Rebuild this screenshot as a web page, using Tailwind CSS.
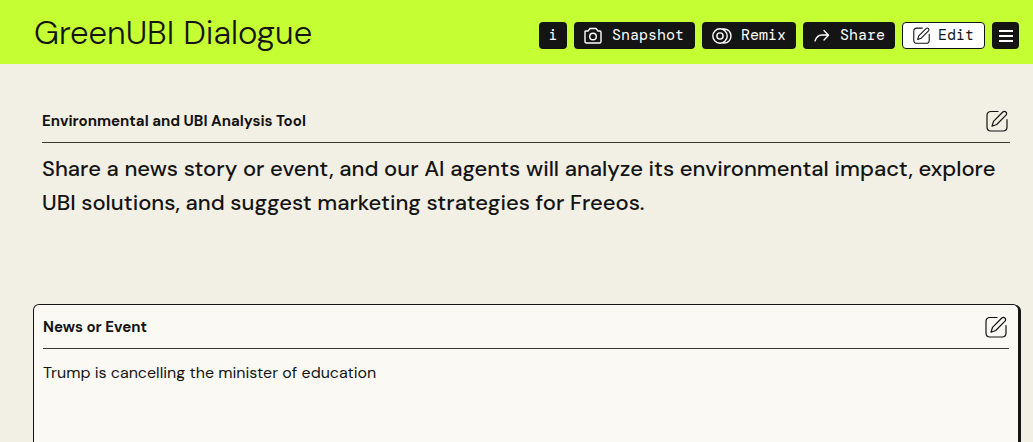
<!DOCTYPE html>
<html lang="en">
<head>
<meta charset="utf-8">
<meta name="viewport" content="width=device-width, initial-scale=1">
<title>GreenUBI Dialogue</title>
<script src="https://cdn.jsdelivr.net/npm/@tailwindcss/browser@4"></script>
</head>
<body class="min-h-screen bg-[#f2efe4] font-['DM_Sans','Inter',sans-serif] text-[#141414]">
<svg class="hidden" aria-hidden="true">
  <symbol id="pencil" viewBox="0 0 22 22" fill="none" stroke="currentColor" stroke-linecap="round" stroke-linejoin="round">
    <path d="M12 1.500H5Q1 1.500 1 5.500V17Q1 21 5 21H17Q21 21 21 17V9.500"/>
    <path d="M6 16.200L7.500 11.400L16.800 2Q18.400 .6 19.900 2Q21.300 3.500 20 5.100L10.700 14.500Z"/>
  </symbol>
</svg>
<header class="flex h-16 items-center justify-between bg-[#c5ff33] pr-[14px] pl-[34px]">
  <h1 class="pt-px text-[33px] leading-10 font-light whitespace-nowrap">GreenUBI Dialogue</h1>
  <nav class="flex gap-[7px] pt-[7px] font-['DM_Mono','Liberation_Mono',monospace] text-[15px] leading-5">
    <button class="h-[27px] w-7 rounded bg-[#141414] pb-[2px] text-white">i</button>
    <button class="flex h-[27px] items-center gap-[10px] rounded bg-[#141414] pr-[11px] pl-[10px] text-white">
      <svg class="h-5 w-[18px]" viewBox="0 0 18 20" fill="none" stroke="currentColor" stroke-width="1.4" stroke-linejoin="round"><path d="M1 5.500Q1 5 2 5H4L6 2.500H12L14 5H16Q17 5 17 6V15.500Q17 17 15.500 17H2.500Q1 17 1 15.500Z"/><circle cx="9" cy="10.500" r="3.300"/></svg>
      <span class="pb-[2px]">Snapshot</span>
    </button>
    <button class="flex h-[27px] items-center gap-[9px] rounded bg-[#141414] px-[10px] text-white">
      <svg class="h-5 w-5" viewBox="0 0 20 20" fill="none" stroke="currentColor" stroke-width="1.4"><circle cx="8" cy="10" r="7.200"/><circle cx="8" cy="10" r="3.100"/><path d="M10.500 3.100C21.800 1.500 21.800 18.500 10.500 16.900"/></svg>
      <span class="pb-[2px]">Remix</span>
    </button>
    <button class="flex h-[27px] items-center gap-[9px] rounded bg-[#141414] px-[10px] text-white">
      <svg class="h-5 w-[18px]" viewBox="0 0 18 20" fill="none" stroke="currentColor" stroke-width="1.3" stroke-linecap="round" stroke-linejoin="round"><path d="M2 15Q4 9 9 9H15.500M11 4.500L15.500 9.200L11 14"/></svg>
      <span class="pb-[2px]">Share</span>
    </button>
    <button class="flex h-[27px] items-center gap-2 rounded border border-[#141414] bg-white px-[10px]">
      <svg class="h-[17px] w-[17px]" stroke-width="1.4"><use href="#pencil"/></svg>
      <span class="pb-[2px]">Edit</span>
    </button>
    <button class="flex h-[27px] w-[27px] items-center justify-center rounded bg-[#141414] text-white" aria-label="Menu">
      <svg class="h-[13px] w-[14px]" viewBox="0 0 14 13" stroke="currentColor" stroke-width="2"><path d="M0 2H14M0 7H14M0 12H14"/></svg>
    </button>
  </nav>
</header>
<main class="pr-[14px] pl-[33px]">
  <section class="mt-8 pr-[9px] pl-[9px]">
    <div class="flex h-[47px] items-end justify-between border-b border-[#38382f] pb-[10px]">
      <h2 class="text-[15px] leading-[21px] font-bold">Environmental and UBI Analysis Tool</h2>
      <button class="mr-[2px]" aria-label="Edit section"><svg class="h-[22px] w-[22px]" stroke-width="1.2"><use href="#pencil"/></svg></button>
    </div>
    <p class="mt-[9px] text-[22px] leading-[34px] font-medium">Share a news story or event, and our AI agents will analyze its environmental impact, explore UBI solutions, and suggest marketing strategies for Freeos.</p>
  </section>
  <section class="mt-[84px] h-[138px] rounded-t-md border border-b-0 border-[#141414] bg-[#faf9f3] pr-[9px] pl-[9px] shadow-[2px_1px_0_#141414]">
    <div class="flex h-11 items-end justify-between border-b border-[#38382f] pb-[10px]">
      <label for="news" class="text-[15px] leading-[21px] font-bold">News or Event</label>
      <button class="mr-[2px]" aria-label="Edit News or Event"><svg class="h-[22px] w-[22px]" stroke-width="1.2"><use href="#pencil"/></svg></button>
    </div>
    <textarea id="news" class="mt-3 block h-20 w-full resize-none overflow-hidden bg-transparent text-[16px] leading-6 outline-none">Trump is cancelling the minister of education</textarea>
  </section>
</main>
</body>
</html>
